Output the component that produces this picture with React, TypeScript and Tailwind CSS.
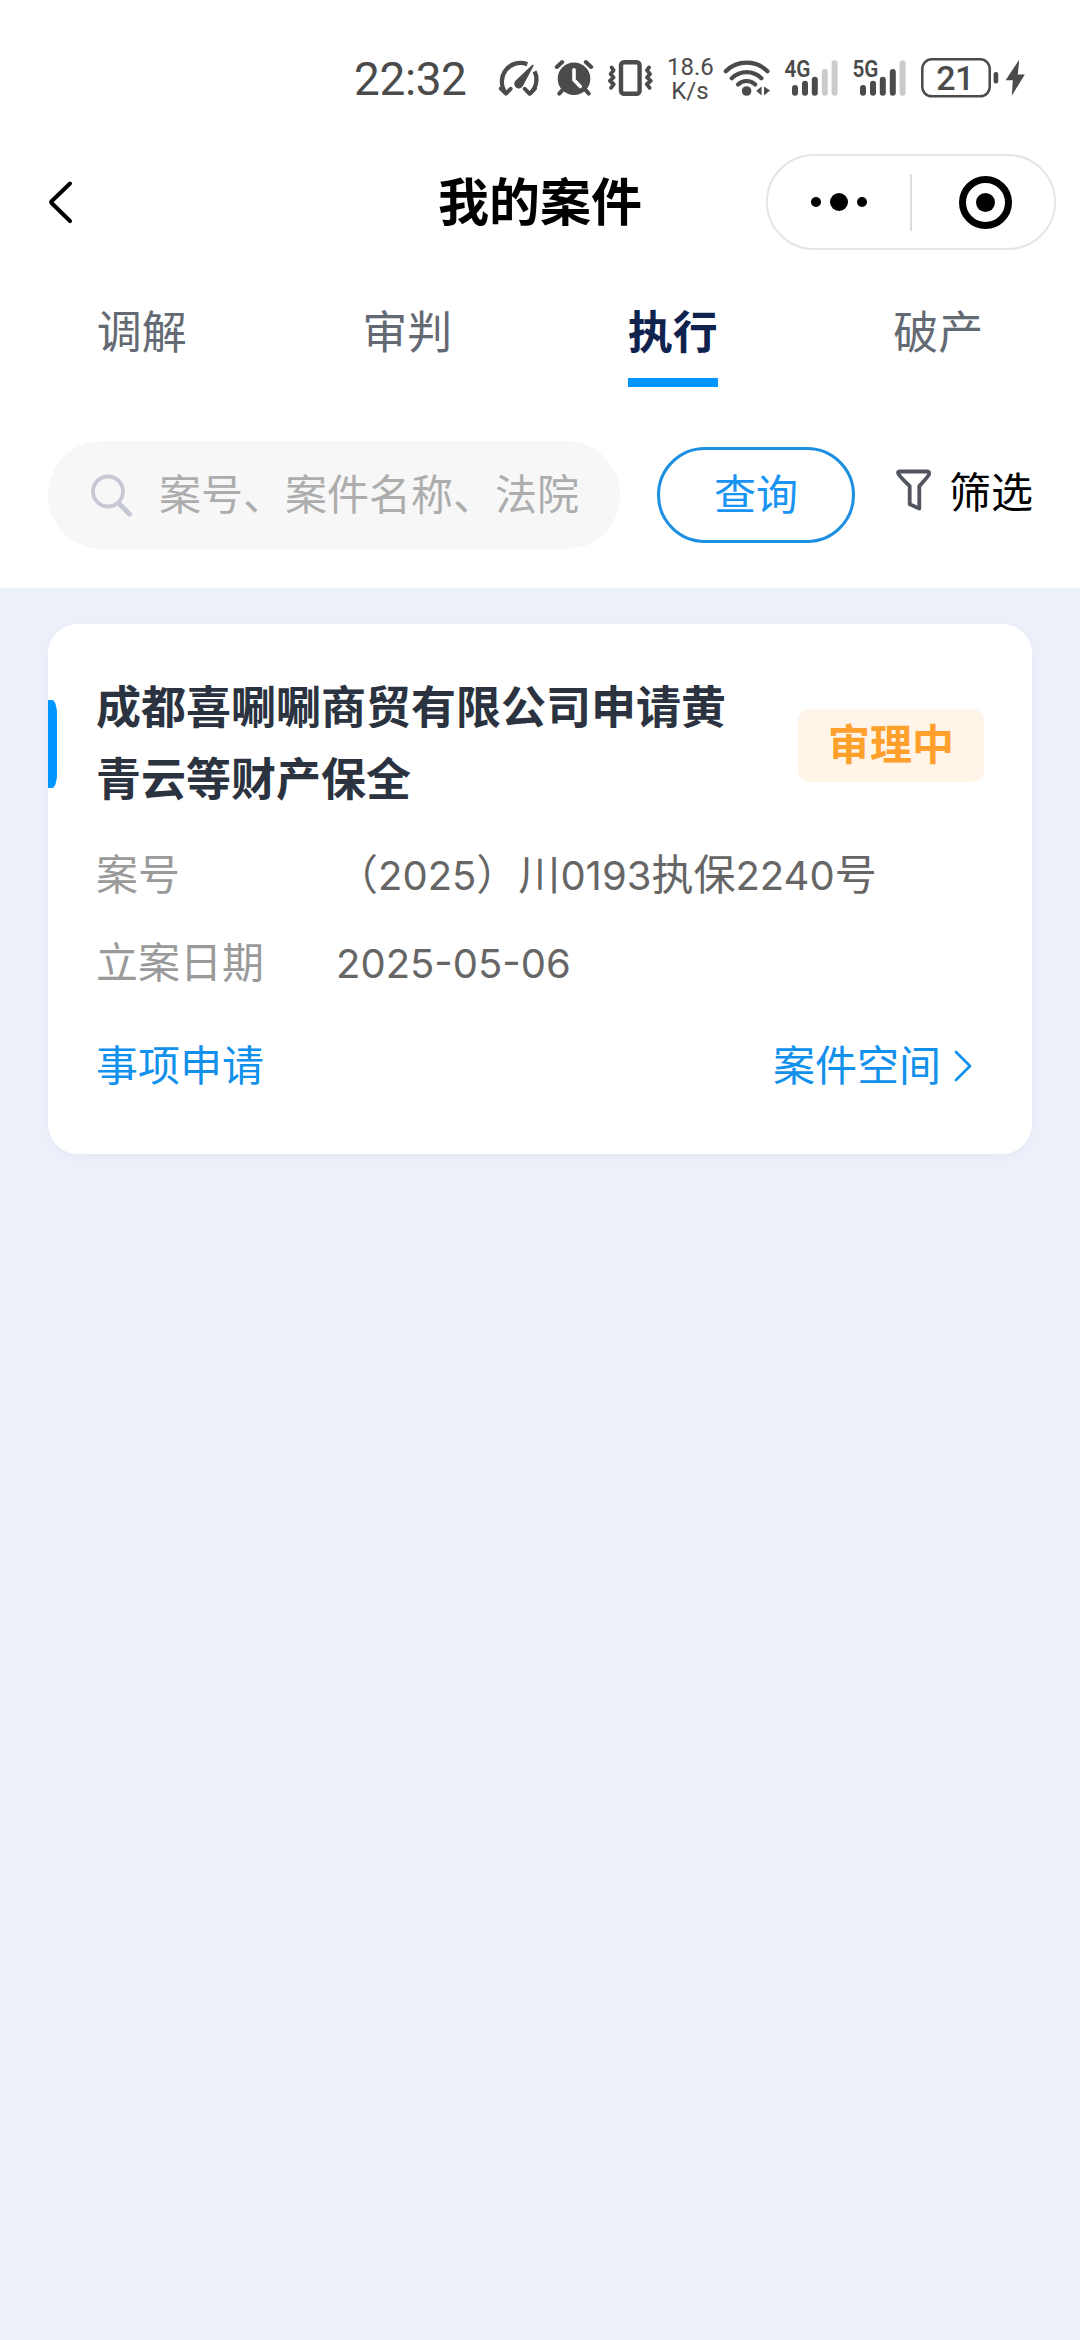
import type { ReactNode } from "react";

const tabs = ["调解", "审判", "执行", "破产"];
const activeTab = "执行";

function SpeedIcon() {
  return (
    <svg className="h-[38px] w-[44px]" viewBox="0 0 44 38" fill="none" stroke="#4b4b4b">
      <path d="M30.3 5.2A18.6 18.6 0 0 0 9 34.2" strokeWidth="4.2" />
      <path d="M37.6 12.3A18.6 18.6 0 0 1 33.4 34.2" strokeWidth="4.2" />
      <path d="M3.8 29.5L9 34.6l4.6-4.8M27.8 29.8l4.9 5 5.2-5.2" strokeWidth="4" strokeLinejoin="round" strokeLinecap="round" />
      <path d="M34.8 6.2c1.2-.9 2.2-.2 1.6 1.1L26 26.8a4.6 4.6 0 1 1-7.6-5z" fill="#4b4b4b" stroke="none" />
    </svg>
  );
}

function AlarmIcon() {
  return (
    <svg className="h-[38px] w-[40px]" viewBox="0 0 40 38" fill="none" stroke="#4b4b4b" strokeLinecap="round">
      <circle cx="20" cy="19.7" r="16.3" fill="#4b4b4b" stroke="none" />
      <path d="M2.8 8L8.2 3M31.8 3L37.2 8" strokeWidth="4" />
      <path d="M8.5 31L5.2 34.6M31.5 31l3.3 3.6" strokeWidth="4" />
      <path d="M20 10.8v10.3l6.3 6.3" stroke="#fff" strokeWidth="3.6" strokeLinejoin="round" />
    </svg>
  );
}

function VibrateIcon() {
  return (
    <svg className="h-[38px] w-[46px]" viewBox="0 0 46 38" fill="none" stroke="#4b4b4b" strokeLinejoin="round" strokeLinecap="round">
      <rect x="14" y="3.2" width="18.6" height="31.6" rx="3" strokeWidth="4.4" />
      <path d="M4.6 8.4l2 3-3 3.6 3 3.4-3.8 3.4 4 3.4-2.8 3.6" strokeWidth="3.8" />
      <path d="M42 8.4l-2 3 3 3.6-3 3.4 3.8 3.4-4 3.4 2.8 3.6" strokeWidth="3.8" />
    </svg>
  );
}

function WifiStatusIcon() {
  return (
    <svg className="h-[38px] w-[48px]" viewBox="0 0 48 38" fill="none" stroke="#4b4b4b" strokeLinecap="round">
      <path d="M2.8 12.2c11.5-11.4 30.3-11.4 41.6 0" strokeWidth="4.2" />
      <path d="M8.8 19.2c8.2-8.2 21.5-8.2 29.6 0" strokeWidth="4.2" />
      <path d="M15 25.6c4.8-4.8 12.4-4.8 17.2 0" strokeWidth="4.2" />
      <circle cx="23.6" cy="32" r="4.8" fill="#4b4b4b" stroke="none" />
      <path d="M38.6 27.5v9l-5.4-4.7zM41 27.5v9l6-5z" fill="#4b4b4b" stroke="none" />
    </svg>
  );
}

function SignalIcon({ label, strong }: { label: string; strong: boolean }) {
  return (
    <svg className="-mt-[6px] h-[44px] w-[55px]" viewBox="0 -6 55 44">
      <text x="0.5" y="18.4" textLength="26" lengthAdjust="spacingAndGlyphs" fontFamily="Roboto, sans-serif" fontWeight="600" fontSize="24" fill="#4b4b4b">
        {label}
      </text>
      <g strokeWidth="6" strokeLinecap="round" stroke="#4b4b4b">
        <path d="M11 29v4.8M21 24.8v9M30.8 20.8v13" />
        <path d="M40.8 13v20.8" stroke={strong ? "#4b4b4b" : "#cbcbcb"} />
        <path d="M50.6 4.2v29.6" stroke="#cbcbcb" />
      </g>
    </svg>
  );
}

function BatteryIcon() {
  return (
    <svg className="h-[40px] w-[104px]" viewBox="0 0 104 40">
      <rect x="1.3" y="1.3" width="67.4" height="37" rx="9.5" fill="none" stroke="#4b4b4b" strokeWidth="2.5" />
      <rect x="72.6" y="14" width="4.6" height="11.6" rx="2" fill="#4b4b4b" />
      <text x="34" y="31.8" textAnchor="middle" fontFamily="Roboto, sans-serif" fontWeight="500" fontSize="34" letterSpacing="-0.6" fill="#4b4b4b">
        21
      </text>
      <path d="M98.2 1.8L84.6 22.2h7.2l-1 15.6L103.8 16.4h-7z" fill="#4b4b4b" />
    </svg>
  );
}

function StatusBar() {
  return (
    <div className="flex h-[140px] items-start pt-[59px] pl-[354px] text-[#4b4b4b]">
      <div className="-mt-px w-[143px] font-[Roboto] text-[46px] leading-[42px] tracking-[-0.4px]">22:32</div>
      <SpeedIcon />
      <div className="ml-[13px]"><AlarmIcon /></div>
      <div className="ml-[13px]"><VibrateIcon /></div>
      <div className="mt-[-4px] ml-[14px] w-[46px] text-center font-[Roboto] text-[24px] leading-[24px]">
        <div>18.6</div>
        <div>K/s</div>
      </div>
      <div className="ml-[10px]"><WifiStatusIcon /></div>
      <div className="ml-[13px]"><SignalIcon label="4G" strong={false} /></div>
      <div className="ml-[13px]"><SignalIcon label="5G" strong /></div>
      <div className="mt-[-1px] ml-[14px]"><BatteryIcon /></div>
    </div>
  );
}

function Header() {
  return (
    <header className="grid h-[124px] grid-cols-[1fr_auto_1fr] items-center">
      <svg className="ml-[46px] h-[46px] w-[30px]" viewBox="0 0 30 46" fill="none" stroke="#000" strokeWidth="4" strokeLinecap="round" strokeLinejoin="round">
        <path d="M24 4.5L5.6 22.2q-.9.9 0 1.8L24 42" />
      </svg>
      <h1 className="-mt-[6px] text-[51px] leading-[60px] font-bold text-black">我的案件</h1>
      <div className="mr-6 flex h-[96px] w-[290px] items-center justify-self-end rounded-full border-2 border-[#e5e5e5]">
        <div className="flex flex-1 items-center justify-center gap-[9px]">
          <span className="size-[10px] rounded-full bg-black" />
          <span className="size-[18px] rounded-full bg-black" />
          <span className="size-[10px] rounded-full bg-black" />
        </div>
        <div className="h-[57px] w-[2px] bg-[#dcdcdc]" />
        <div className="flex flex-1 items-center justify-center">
          <div className="mr-[-5px] flex size-[53px] items-center justify-center rounded-full border-[7px] border-black">
            <span className="size-[19px] rounded-full bg-black" />
          </div>
        </div>
      </div>
    </header>
  );
}

function Tabs() {
  return (
    <nav className="grid h-[124px] grid-cols-4 px-[9px] pt-[33px] text-[45px] leading-[66px]">
      {tabs.map((tab) => (
        <div key={tab} className="flex flex-col items-center">
          {tab === activeTab ? (
            <>
              <span className="font-bold text-[#10234f]">{tab}</span>
              <span className="mt-[15px] h-[9px] w-[90px] bg-[#0096ff]" />
            </>
          ) : (
            <span className="text-[#646a73]">{tab}</span>
          )}
        </div>
      ))}
    </nav>
  );
}

function SearchRow() {
  return (
    <div className="flex h-[200px] items-start pt-[53px] pl-12 text-[42px]">
      <div className="flex h-[108px] w-[572px] shrink-0 items-center rounded-full bg-[#f7f7f7] pl-[42px] text-[#adadad]">
        <svg className="h-[44px] w-[44px]" viewBox="0 0 44 44" fill="none" stroke="#c6c9d3" strokeWidth="3.8" strokeLinecap="round">
          <circle cx="18" cy="18.5" r="15" />
          <path d="M29 30.5L39.4 41" strokeWidth="5" />
        </svg>
        <span className="-mt-[7px] ml-[25px] leading-[60px] whitespace-nowrap">案号、案件名称、法院</span>
      </div>
      <div className="mt-[6px] ml-[37px] flex h-[96px] w-[198px] shrink-0 items-center justify-center rounded-full border-[3px] border-[#1c8fe3] pb-[8px] text-[#1a94f2]">
        查询
      </div>
      <svg className="mt-[26px] ml-[39px] h-[46px] w-[40px] shrink-0" viewBox="0 0 40 46" fill="none" stroke="#52555f" strokeWidth="3.8" strokeLinejoin="round">
        <path d="M5 4.5h28.5q2.2.2 1.6 2.6-.4 1.8-9.8 12V41.5l-9.6-4.2V19.2Q5.4 9 4.6 7.2 3.4 4.8 5 4.5z" />
      </svg>
      <span className="mt-[19px] ml-[15px] leading-[60px] whitespace-nowrap text-black">筛选</span>
    </div>
  );
}

function Row({ label, children }: { label: string; children: ReactNode }) {
  return (
    <div className="flex h-[88px] items-center">
      <span className="-mt-[4px] w-[240px] text-[#9a9a9a]">{label}</span>
      <span className="-mt-px whitespace-nowrap text-[#666]">{children}</span>
    </div>
  );
}

function Digits({ children }: { children: ReactNode }) {
  return <span className="font-[Inter] text-[40px]">{children}</span>;
}

function CaseCard() {
  return (
    <section className="relative mx-12 h-[530px] rounded-[30px] bg-white px-12 pt-[45px] text-[42px] leading-[60px] shadow-[0_3px_12px_rgba(80,110,170,0.05)]">
      <div className="absolute top-[76px] left-0 h-[88px] w-[9px] rounded-r-[5px_14px] bg-[#0096ff]" />
      <div className="flex items-center justify-between">
        <h2 className="w-[640px] text-[45px] leading-[72px] font-bold text-[#2b3340]">成都喜唰唰商贸有限公司申请黄青云等财产保全</h2>
        <div className="mt-[9px] h-[73px] w-[186px] rounded-[12px] bg-[#fff4e8] text-center leading-[65px] font-bold text-[#ffa02d]">审理中</div>
      </div>
      <div className="mt-[17px]">
        <Row label="案号">
          （<Digits>2025</Digits>）川<Digits>0193</Digits>执保<Digits>2240</Digits>号
        </Row>
        <Row label="立案日期">
          <Digits>2025-05-06</Digits>
        </Row>
      </div>
      <div className="mt-[27px] flex items-center justify-between text-[#1190ec]">
        <span>事项申请</span>
        <span className="flex items-center">
          案件空间
          <svg className="mt-[5px] mr-[11px] ml-[12px] h-[34px] w-[20px]" viewBox="0 0 20 34" fill="none" stroke="currentColor" strokeWidth="2.8" strokeLinecap="round" strokeLinejoin="round">
            <path d="M3 3l14 14L3 31" />
          </svg>
        </span>
      </div>
    </section>
  );
}

export default function App() {
  return (
    <div className="min-h-[2340px] w-[1080px] bg-[#ecf0f9] font-['Noto_Sans_CJK_SC',sans-serif]">
      <div className="h-[588px] bg-white">
        <StatusBar />
        <Header />
        <Tabs />
        <SearchRow />
      </div>
      <main className="pt-9">
        <CaseCard />
      </main>
    </div>
  );
}
